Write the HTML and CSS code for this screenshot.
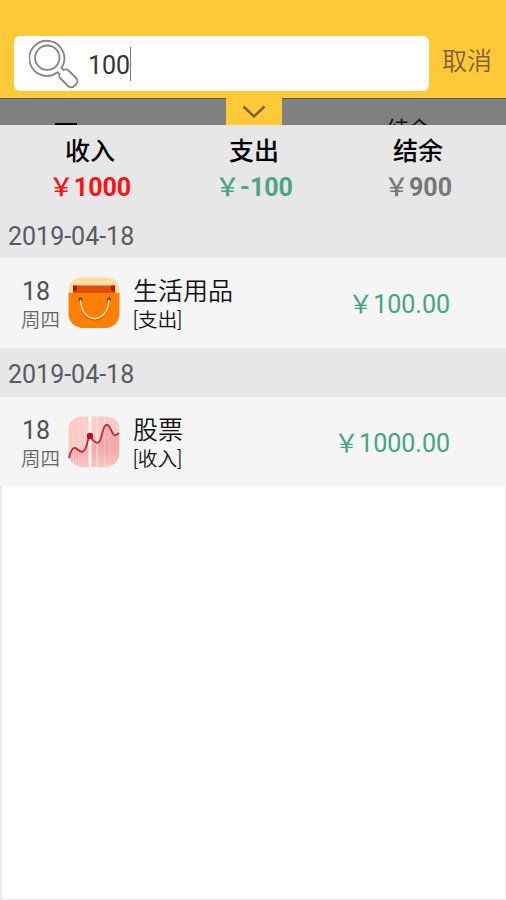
FILE: index.html
```html
<!DOCTYPE html>
<html lang="zh-CN">
<head>
<meta charset="utf-8">
<title>搜索</title>
<link rel="stylesheet" href="styles.css">
</head>
<body>
<div class="screen">
  <header class="header">
    <div class="search">
      <svg class="search-icon" viewBox="0 0 50 50" fill="none" stroke="#858585" stroke-width="1.8">
        <circle cx="18.3" cy="18.7" r="12.2"/>
        <path d="M32.3 29.2A17.5 17.5 0 1 0 28.5 33.2L30.5 35Q29.5 38 32 40L39 47Q42.500 50 46 46.500Q50.500 42.500 47 39L39.500 31.500Q37 29.500 34.500 31Z"/>
      </svg>
      <span class="query">100</span><span class="caret"></span>
    </div>
    <span class="cancel">取消</span>
  </header>
  <div class="dimmed">
    <div class="dim left"><span class="dash"></span></div>
    <div class="tab"><svg width="24" height="14" viewBox="0 0 24 14" fill="none" stroke="#806037" stroke-width="2.6"><path d="M1.500 1.500L12 11.500L22.500 1.500"/></svg></div>
    <div class="dim right"><span class="behind">结余</span></div>
  </div>
  <section class="summary">
    <div class="total"><span class="label">收入</span><span class="sum red"><span class="yen">￥</span>1000</span></div>
    <div class="total"><span class="label">支出</span><span class="sum green"><span class="yen">￥</span>-100</span></div>
    <div class="total"><span class="label">结余</span><span class="sum gray"><span class="yen">￥</span>900</span></div>
  </section>
  <main class="list">
    <div class="date">2019-04-18</div>
    <div class="row">
      <div class="day"><span class="num">18</span><span class="week">周四</span></div>
      <svg class="icon" viewBox="0 0 52 52">
        <defs><clipPath id="tile"><path d="M13 .5H39Q51.500 1.500 51.500 14V38Q50 49 39 51H13Q2 49 .5 38V14Q.5 2 13 .5Z"/></clipPath></defs>
        <g clip-path="url(#tile)">
          <path fill="#ffdda0" d="M0 0H52V20H0Z"/>
          <path fill="#ff7f05" d="M0 16H52V52H0Z"/>
          <path fill="#de4e0b" d="M5 8.500H47V16H5Z"/>
          <path fill="#b9150b" d="M5 8.500H9V13L5 15ZM47 8.500H43V13L47 15Z"/>
        </g>
        <circle cx="12.500" cy="22.500" r="2" fill="#67300d"/><circle cx="41" cy="22.500" r="2" fill="#67300d"/>
        <path d="M12.500 24C13 49 40.500 49 41 24" fill="none" stroke="#b86410" stroke-width="1.700"/>
        <path d="M12.500 22.500C13 48 40.500 48 41 22.500" fill="none" stroke="#ffe0a2" stroke-width="1.500"/>
      </svg>
      <div class="info"><span class="name">生活用品</span><span class="kind">[支出]</span></div>
      <span class="amount">￥100.00</span>
    </div>
    <div class="date">2019-04-18</div>
    <div class="row second">
      <div class="day"><span class="num">18</span><span class="week">周四</span></div>
      <svg class="icon" viewBox="0 0 52 52">
        <defs><linearGradient id="area" x1="0" y1="0" x2="0" y2="1"><stop stop-color="#e9a09f"/><stop offset=".55" stop-color="#e79b9b"/><stop offset="1" stop-color="#fac3c0"/></linearGradient></defs>
        <g clip-path="url(#tile)">
          <path fill="#fbcbc8" d="M0 0H52V52H0Z"/>
          <path d="M1 42C3 33 6 30 9 33C14 38 17 36 19 28Q20 22 22 20C25 24 30 32 33 22C35 15 36 7 40 9C44 12 44 24 51 17V52H1Z" fill="url(#area)" fill-opacity=".65"/>
          <path fill="#fff" fill-opacity=".2" d="M5 0h1v52H5zM10 0h1v52h-1zM16 0h1v52h-1zM36 0h1v52h-1zM41 0h1v52h-1z"/>
          <path fill="#fff" fill-opacity=".8" d="M20.500 0h3v52h-3z"/>
          <path fill="#fff" fill-opacity=".45" d="M28.500 0h1.500v52h-1.500z"/>
        </g>
        <path d="M1 42C3 33 6 30 9 33C14 38 17 36 19 28Q20 22 22 20C25 24 30 32 33 22C35 15 36 7 40 9C44 12 44 24 51 17" fill="none" stroke="#b52e3c" stroke-width="1.800"/>
        <circle cx="22" cy="20" r="3.200" fill="#b70f20"/>
      </svg>
      <div class="info"><span class="name">股票</span><span class="kind">[收入]</span></div>
      <span class="amount">￥1000.00</span>
    </div>
  </main>
  <div class="empty"></div>
</div>
</body>
</html>
```

FILE: styles.css
```css
* { box-sizing: border-box; }
body { margin: 0; font-family: Roboto, "Noto Sans CJK SC", sans-serif; font-size: 25px; }
.screen { width: 506px; height: 900px; display: flex; flex-direction: column; overflow: hidden; background: #fff; }
.header { height: 98px; background: #ffc938; display: flex; align-items: flex-start; padding: 36px 14px 0; flex: none; }
.search { width: 415px; height: 55px; background: #fff; border-radius: 6px; display: flex; align-items: center; padding-left: 15px; }
.search-icon { width: 50px; height: 50px; margin-right: 9px; }
.query { color: #333; line-height: 30px; padding-top: 4px; }
.caret { width: 1px; height: 34px; background: #777; }
.cancel { color: #806037; margin-left: 13px; line-height: 36px; margin-top: 8px; font-weight: 350; }
.dimmed { height: 27px; display: flex; flex: none; background: #ffc938; }
.dim { height: 27px; background: #808080; border-top: 1px solid #59615d; overflow: hidden; }
.left { width: 226px; padding: 24px 0 0 55px; }
.dash { display: block; width: 22px; height: 2px; background: #000; }
.tab { width: 56px; display: flex; justify-content: center; padding-top: 7px; }
.right { width: 224px; padding: 18px 0 0 105px; }
.behind { display: block; font-size: 21.5px; line-height: 26px; color: #111; }
.summary { height: 85px; background: #e7e7e7; display: flex; padding: 0 6px 0 8px; flex: none; }
.total { flex: 1; display: flex; flex-direction: column; align-items: center; }
.label { line-height: 36px; margin-top: 9px; font-weight: 500; color: #000; }
.sum { line-height: 36px; font-weight: 700; }
.yen { font-weight: 500; }
.red { color: #f11; }
.green { color: #4ba583; }
.gray { color: #777; }
.list { flex: none; }
.date { height: 49px; line-height: 53px; padding-left: 8px; background: #e7e7e7; color: #575a63; }
.row { height: 90px; background: #f5f5f5; display: flex; padding: 0 56px 0 21px; }
.date:first-child { height: 48px; }
.second { height: 89px; }
.day { width: 47px; display: flex; flex-direction: column; padding-top: 18px; }
.num { line-height: 32px; padding-left: 1px; color: #4c4f5a; }
.week { font-size: 19.5px; line-height: 26px; color: #666; font-weight: 350; }
.icon { width: 52px; height: 52px; margin-top: 19px; }
.info { display: flex; flex-direction: column; padding: 17px 0 0 13px; color: #111; font-weight: 350; }
.name { line-height: 33px; }
.kind { font-size: 19.8px; line-height: 26px; }
.amount { margin-left: auto; line-height: 93px; color: #46a382; font-weight: 400; }
.empty { flex: 1; border: 2px solid #ececec; border-width: 0 1px 1px 2px; background: #fff; }
```
